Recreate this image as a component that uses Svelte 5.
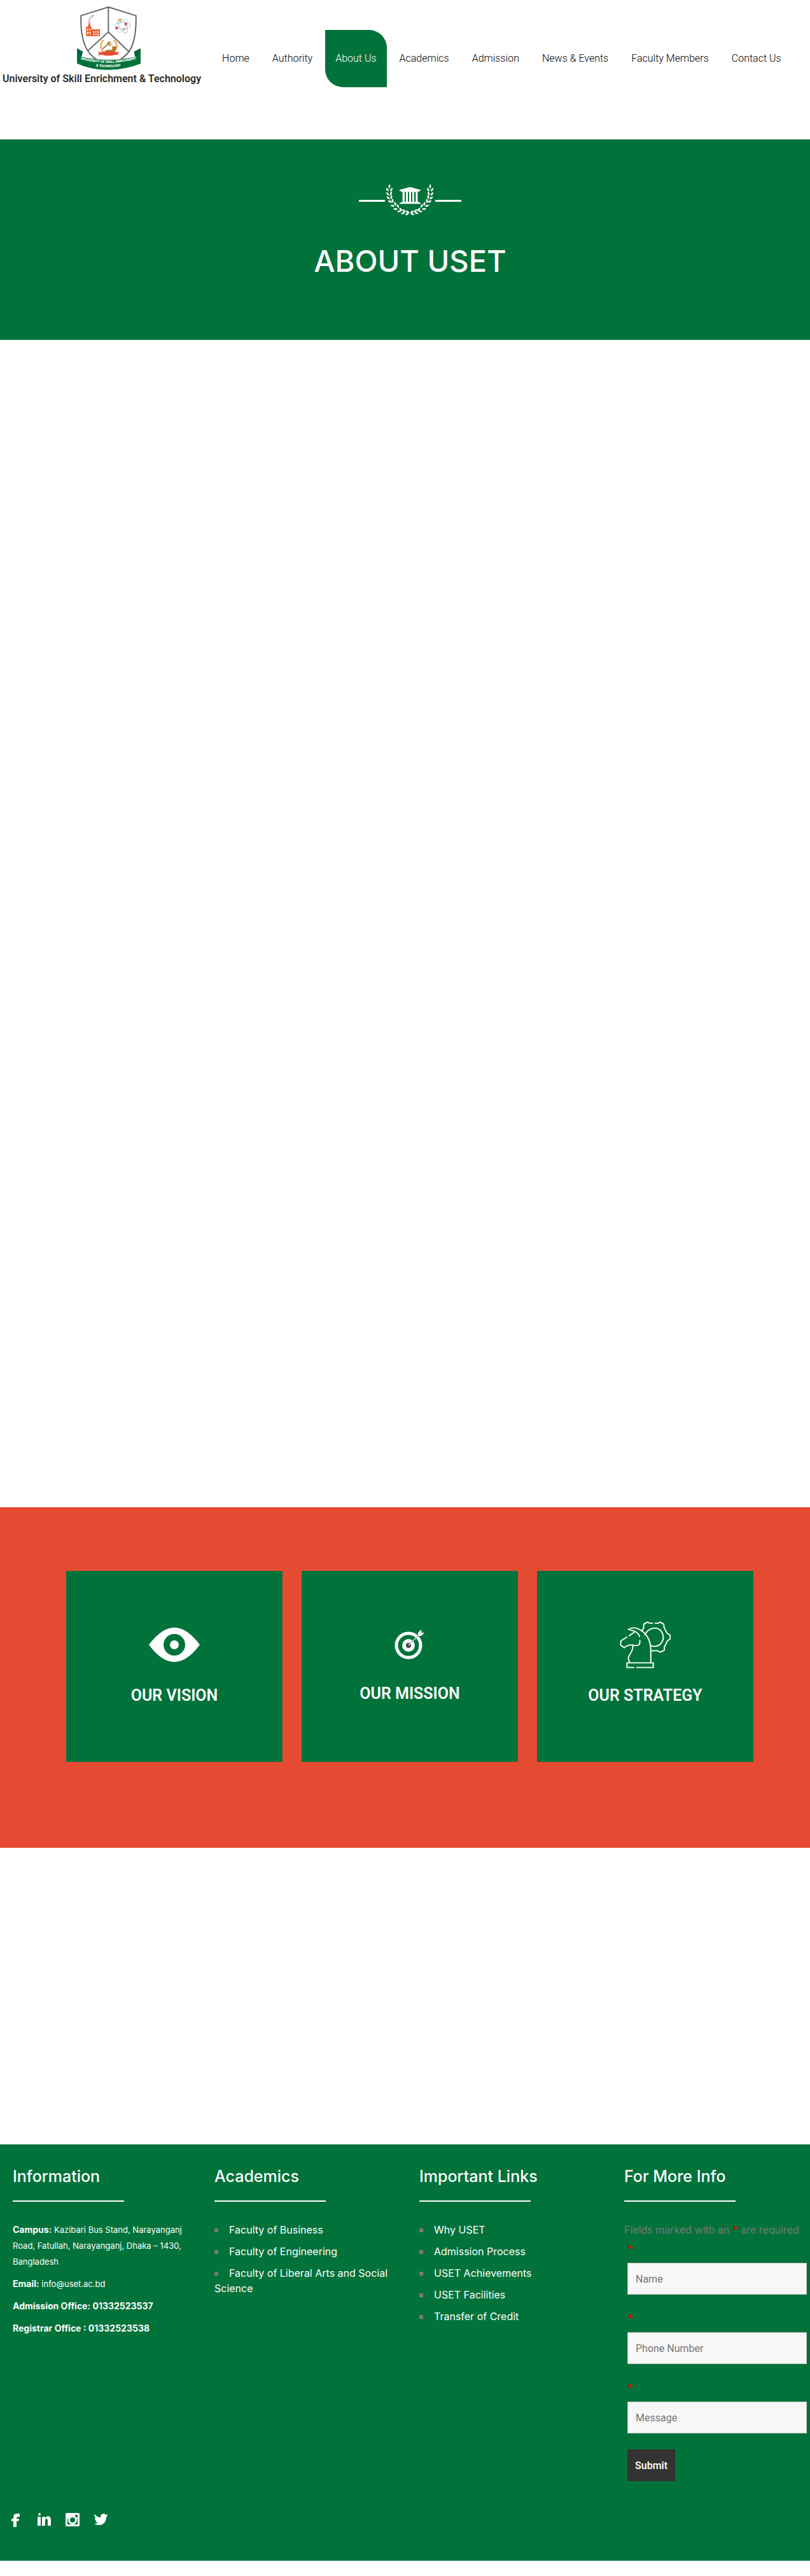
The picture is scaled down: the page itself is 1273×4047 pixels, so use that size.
<script>
  const nav = ['Home', 'Authority', 'About Us', 'Academics', 'Admission', 'News & Events', 'Faculty Members', 'Contact Us'];
  const academics = ['Faculty of Business', 'Faculty of Engineering', 'Faculty of Liberal Arts and Social Science'];
  const links = ['Why USET', 'Admission Process', 'USET Achievements', 'USET Facilities', 'Transfer of Credit'];
  const fields = [
    { id: 'name', label: 'Name' },
    { id: 'phone', label: 'Phone Number' },
    { id: 'message', label: 'Message' }
  ];
  // x, y and rotation of every leaf on the left half of the wreath
  const leaves = [
    [516, 99, 0], [507, 114, -32], [525, 114, 32], [508, 134, -42], [523, 132, 18],
    [511, 153, -52], [525, 149, 8], [519, 170, -62], [531, 167, -2], [531, 190, -78],
    [543, 181, -14], [545, 205, -88], [556, 191, -28], [562, 216, 78], [570, 208, -42],
    [580, 224, 72], [585, 213, -50], [599, 229, 62], [602, 219, -60]
  ];
</script>

<header>
  <a class="brand" href="#home">
    <svg class="logo" viewBox="63 30 300 300" aria-hidden="true">
      <path d="M211 33 341 74Q344 180 313 236Q280 285 211 306Q142 285 112 236Q78 180 82 74Z" fill="#fff" stroke="#666" stroke-width="6" />
      <path d="M211 33V151M211 151 114 239M211 151 310 246" fill="none" stroke="#6b6b6b" stroke-width="6" />
      <path d="M106 170V126h9l3-24h6l3 24h5v15l12-5v5l12-5v5l15-5v34z" fill="#f15a29" />
      <path d="M111 134h5v10h-5zM122 134h5v10h-5zM111 150h5v12h-5zM122 150h5v12h-5zM139 147h6v7h-6zM149 147h6v7h-6zM160 147h6v7h-6zM139 158h6v7h-6zM149 158h6v7h-6zM160 158h6v7h-6zM117 110h8v3h-8z" fill="#fff" />
      <path d="M119 88q5-8 15-7-3 6-15 7zM126 78q6-7 20-6-4 8-20 6zM117 92h10v5h-10z" fill="#9a8d8b" />
      <g fill="none" stroke="#7aa5bd" stroke-width="2">
        <ellipse cx="278" cy="121" rx="17" ry="38" transform="rotate(-28 278 121)" />
        <ellipse cx="278" cy="121" rx="17" ry="38" transform="rotate(32 278 121)" stroke="#a8d4ee" />
        <ellipse cx="278" cy="121" rx="37" ry="16" />
      </g>
      <circle cx="266" cy="96" r="6" fill="#d4a12a" /><circle cx="293" cy="113" r="6" fill="#d7262f" />
      <circle cx="250" cy="132" r="6" fill="#d7262f" /><circle cx="284" cy="138" r="6" fill="#d3ac60" />
      <g fill="none" stroke="#eda04d" stroke-width="9" stroke-dasharray="7 2">
        <path d="M188 189Q163 216 187 244M237 189Q263 216 239 244" />
      </g>
      <path d="M184 230 210 208" stroke="#9b6a1d" stroke-width="5" />
      <path d="m203 203 13-10 12 18-10 8z" fill="#c38923" /><path d="m216 194 16 3-3 19-9-2z" fill="#ddd5c8" />
      <path d="M193 241q20-13 50-2l-2 7h-46zM229 218h18v20h-18z" fill="#b37b21" />
      <path d="M162 243 175 247Q212 238 247 247L260 243 255 254 260 260 246 257Q212 268 178 257L162 261 167 251Z" fill="#e84a31" />
      <path d="M63 228 90 242 84 268Q211 296 336 268L333 242 363 228V300Q285 330 211 329 130 330 63 299Z" fill="#00713a" />
      <path d="M63 228 83 262 90 242M363 228 340 262 333 242" fill="none" stroke="#073d24" stroke-width="3" />
      <path id="band" d="M74 278Q211 316 350 276" fill="none" />
      <path id="band-low" d="M145 312Q211 322 277 311" fill="none" />
      <text class="band-text"><textPath href="#band" startOffset="50%">UNIVERSITY OF SKILL ENRICHMENT</textPath></text>
      <text class="band-text"><textPath href="#band-low" startOffset="50%">&amp; TECHNOLOGY</textPath></text>
    </svg>
    <span>University of Skill Enrichment &amp; Technology</span>
  </a>
  <nav>
    {#each nav as item}
      <a href="#{item}" class:active={item === 'About Us'}>{item}</a>
    {/each}
  </nav>
</header>

<main>
  <section class="hero">
    <svg class="wreath" viewBox="372 84 483 156" aria-hidden="true" fill="#fff">
      <path d="M372 162h123v9H372zM732 162h123v9H732z" />
      <path d="M613 101 663 115V120H655V125H571V120H564V115ZM578 126h10v45h-10zM594 126h9v45h-9zM609 126h9v45h-9zM624 126h9v45h-9zM640 126h9v45h-9zM573 171h82v4h8v6h-99v-6h9z" />
      {#each leaves as [x, y, r]}
        <path d="M0-11Q9 0 0 10-9 0 0-11Z" transform="translate({x} {y}) rotate({r})" />
        <path d="M0-11Q9 0 0 10-9 0 0-11Z" transform="translate({1224 - x} {y}) rotate({-r})" />
      {/each}
    </svg>
    <h1>ABOUT USET</h1>
  </section>

  <section class="story"></section>

  <section class="goals">
    <article>
      <svg class="icon" viewBox="0 0 80 80" aria-hidden="true">
        <path d="M0 40Q20 13 40 13T80 40Q60 67 40 67T0 40Z" fill="#fff" />
        <circle cx="40" cy="40" r="17" fill="#02723b" /><circle cx="40" cy="40" r="7" fill="#fff" />
      </svg>
      <h2>OUR VISION</h2>
    </article>
    <article>
      <svg class="icon short" viewBox="0 0 80 74" aria-hidden="true">
        <circle cx="38" cy="38" r="19" fill="none" stroke="#fff" stroke-width="5" />
        <circle cx="38" cy="38" r="10" fill="#fff" /><circle cx="38" cy="38" r="4" fill="#3c4643" />
        <path d="M38 38 57 19" stroke="#c4c4c4" stroke-width="2" />
        <path d="M53 23V18L58 13V18H63L58 23Z" fill="#fff" /><path d="m54 22 7-7" stroke="#b0b5b3" />
      </svg>
      <h2>OUR MISSION</h2>
    </article>
    <article>
      <svg class="icon" viewBox="803 533 205 220" preserveAspectRatio="none" aria-hidden="true" fill="none" stroke="#fff" stroke-width="5" stroke-linejoin="round" stroke-linecap="round">
        <path d="M892 584 899 571 900 554 914 545 924 550H935M946 550H957L966 545 980 554 982 570 994 594 1006 601V618L995 626 983 652 982 667 966 675 955 669H930" />
        <path d="M904 601C918 568 956 562 971 586 989 615 971 651 940 650L927 647" />
        <path d="M928 719V665C928 620 907 588 877 574 861 566 845 571 838 577L858 583C872 588 880 597 883 608M860 590 841 604M831 610 808 626 806 643 821 656C831 645 846 642 855 644 869 649 884 647 884 631V624M855 646C861 679 825 688 843 719" />
        <path d="M860 741H832V721H938V741H871" />
      </svg>
      <h2>OUR STRATEGY</h2>
    </article>
  </section>

  <section class="spacer"></section>
</main>

<footer>
  <div class="columns">
    <section class="info">
      <h3>Information</h3>
      <p><strong>Campus:</strong> Kazibari Bus Stand, Narayanganj Road, Fatullah, Narayanganj, Dhaka – 1430, Bangladesh</p>
      <p><strong>Email:</strong> info@uset.ac.bd</p>
      <p><strong>Admission Office: 01332523537</strong></p>
      <p><strong>Registrar Office : 01332523538</strong></p>
    </section>
    <section>
      <h3>Academics</h3>
      <ul>{#each academics as item}<li><a href="#{item}">{item}</a></li>{/each}</ul>
    </section>
    <section>
      <h3>Important Links</h3>
      <ul>{#each links as item}<li><a href="#{item}">{item}</a></li>{/each}</ul>
    </section>
    <section>
      <h3>For More Info</h3>
      <form>
        <p class="note">Fields marked with an <b>*</b> are required</p>
        {#each fields as field}
          <div class="field">
            <label for={field.id} aria-label={field.label}>*</label>
            <input id={field.id} type="text" placeholder={field.label} />
          </div>
        {/each}
        <button type="button">Submit</button>
      </form>
    </section>
  </div>
  <div class="social">
    <a href="#facebook" aria-label="Facebook"><svg viewBox="-3 0 22 22"><path d="M3 22V13H0V9H3V7Q3 1 8 1H13V6H10Q8 6 8 8V9H12L11 13H8V22Z" /></svg></a>
    <a href="#linkedin" aria-label="LinkedIn"><svg viewBox="0 0 22 22"><circle cx="3" cy="2" r="2" /><path d="M0 6H5V20H0ZM7 6H12V8Q14 5 16 5 21 5 21 11V20H16V12Q16 9 14 9T12 12V20H7Z" /></svg></a>
    <a href="#instagram" aria-label="Instagram"><svg viewBox="0 0 22 22"><rect width="22" height="21" rx="2" /><path class="cut" d="M3 9H19V18H3ZM15 3H19V7H15Z" /><circle cx="11" cy="11" r="7" /><circle class="cut" cx="11" cy="11" r="4" /></svg></a>
    <a href="#twitter" aria-label="Twitter"><svg viewBox="0 0 22 22"><path d="M2 2Q6 7 11 7 11 1 16 1 18 1 19 3L22 2 21 4 22 4 20 7Q19 19 8 19 4 19 1 17 5 17 7 15 4 15 3 12H5Q2 11 2 8L4 8Q0 5 2 2Z" /></svg></a>
  </div>
</footer>

<style>
  :global(body) {
    margin: 0;
    background: #fff;
    font-family: Roboto, sans-serif;
    font-size: 16px;
  }
  header {
    display: flex;
    align-items: flex-start;
    height: 219px;
  }
  .brand {
    display: flex;
    flex-direction: column;
    align-items: center;
    flex: none;
    padding: 10px 17px 0 4px;
    color: #2b2b2b;
    font-weight: 600;
    line-height: 28px;
    text-decoration: none;
  }
  .logo {
    width: 100px;
    height: 100px;
    margin-left: 22px;
  }
  .band-text {
    font-family: Roboto, sans-serif;
    font-size: 16px;
    font-weight: 900;
    fill: #fff;
    text-anchor: middle;
  }
  nav {
    display: flex;
    gap: 4px;
    padding-top: 47px;
  }
  nav a {
    padding: 0 16px;
    line-height: 90px;
    font-weight: 300;
    color: #000;
    white-space: nowrap;
    text-decoration: none;
  }
  nav .active {
    color: #fff;
    background: #02723b;
    border-radius: 0 28px 0 28px;
  }
  .hero {
    display: flex;
    flex-direction: column;
    align-items: center;
    box-sizing: border-box;
    height: 315px;
    padding: 69px 0 0 16px;
    background: #02723b;
    color: #fff;
  }
  .wreath {
    width: 161px;
    height: 52px;
  }
  h1 {
    margin: 40px 0 0;
    font: 500 47px/60px Inter, sans-serif;
  }
  .story {
    min-height: 1834px;
  }
  .goals {
    display: grid;
    grid-template-columns: repeat(3, 1fr);
    gap: 30px;
    padding: 100px 89px 135px 104px;
    background: #e54b32;
  }
  article {
    display: flex;
    flex-direction: column;
    align-items: center;
    justify-content: center;
    height: 300px;
    background: #02723b;
    color: #fff;
  }
  .icon {
    width: 80px;
    height: 80px;
  }
  .icon.short {
    height: 74px;
  }
  h2 {
    margin: 26px 0 14px;
    font-size: 25px;
    font-weight: 600;
    line-height: 28px;
  }
  .spacer {
    min-height: 465px;
    border-bottom: 1px solid #eee;
  }
  footer {
    margin-bottom: 24px;
    padding: 28px 0 53px;
    background: #02723b;
    color: #fff;
    font-family: Inter, sans-serif;
  }
  .columns {
    display: grid;
    grid-template-columns: 317fr 322fr 322fr 292fr;
    padding-left: 20px;
  }
  h3 {
    margin: 0 0 32px;
    font-size: 25px;
    font-weight: 500;
    line-height: 44px;
  }
  h3::after {
    content: '';
    display: block;
    width: 175px;
    height: 2px;
    margin-top: 16px;
    background: #fff;
  }
  .info p {
    max-width: 290px;
    margin: 0 0 10px;
    font-size: 13px;
    line-height: 25px;
  }
  .info strong {
    font-size: 14px;
    font-weight: 700;
    line-height: 16px;
  }
  ul {
    margin: 0;
    padding: 0 34px 0 0;
    list-style: none;
  }
  li {
    margin-bottom: 10px;
    line-height: 24px;
  }
  li::before {
    content: '';
    display: inline-block;
    width: 6px;
    height: 6px;
    margin: 0 17px 2px 0;
    background: #7a7a7a;
  }
  li a {
    color: #fff;
    text-decoration: none;
  }
  form {
    padding-right: 5px;
  }
  .note {
    margin: 0 0 5px;
    color: #787878;
    line-height: 25px;
    white-space: nowrap;
  }
  .note b,
  label {
    color: #e80000;
    font-weight: 700;
  }
  .field {
    margin: 0 0 25px 5px;
  }
  label {
    display: block;
    height: 34px;
    line-height: 24px;
  }
  input {
    display: block;
    box-sizing: border-box;
    width: 100%;
    height: 50px;
    padding: 12px;
    border: 1px solid #c4c4c4;
    background: #f7f7f7;
    font: 16px Roboto, sans-serif;
  }
  input::placeholder {
    color: #757575;
  }
  button {
    display: block;
    height: 50px;
    margin-left: 5px;
    padding: 0 12px;
    border: 0;
    background: #333;
    color: #f7f7f7;
    font: 600 16px Roboto, sans-serif;
  }
  .social {
    display: flex;
    gap: 22px;
    padding: 50px 0 0 15px;
  }
  .social svg {
    display: block;
    width: 22px;
    height: 22px;
    fill: #fff;
  }
  .social .cut {
    fill: #02723b;
  }
</style>
